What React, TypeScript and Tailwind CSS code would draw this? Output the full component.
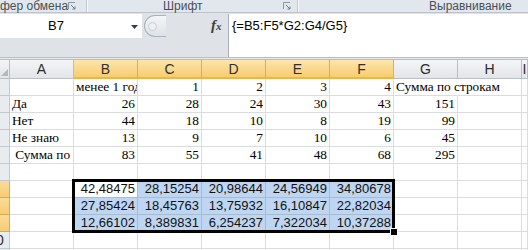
import React from "react";

const COLS = ["A", "B", "C", "D", "E", "F", "G", "H", "I"];
const SEL_COLS = new Set(["B", "C", "D", "E", "F"]);
const SEL_ROWS = new Set([7, 8, 9]);

type Cell = { t: string; align?: "l" | "r"; sans?: boolean; clip?: boolean; overflow?: boolean };

const rows: Record<number, Record<string, Cell>> = {
  1: {
    B: { t: "менее 1 год", align: "l", clip: true },
    C: { t: "1" },
    D: { t: "2" },
    E: { t: "3" },
    F: { t: "4" },
    G: { t: "Сумма по строкам", align: "l", overflow: true },
  },
  2: { A: { t: "Да", align: "l" }, B: { t: "26" }, C: { t: "28" }, D: { t: "24" }, E: { t: "30" }, F: { t: "43" }, G: { t: "151" } },
  3: { A: { t: "Нет", align: "l" }, B: { t: "44" }, C: { t: "18" }, D: { t: "10" }, E: { t: "8" }, F: { t: "19" }, G: { t: "99" } },
  4: { A: { t: "Не знаю", align: "l" }, B: { t: "13" }, C: { t: "9" }, D: { t: "7" }, E: { t: "10" }, F: { t: "6" }, G: { t: "45" } },
  5: { A: { t: "\u00a0Сумма по", align: "l", clip: true }, B: { t: "83" }, C: { t: "55" }, D: { t: "41" }, E: { t: "48" }, F: { t: "68" }, G: { t: "295" } },
  7: { B: { t: "42,48475", sans: true }, C: { t: "28,15254", sans: true }, D: { t: "20,98644", sans: true }, E: { t: "24,56949", sans: true }, F: { t: "34,80678", sans: true } },
  8: { B: { t: "27,85424", sans: true }, C: { t: "18,45763", sans: true }, D: { t: "13,75932", sans: true }, E: { t: "16,10847", sans: true }, F: { t: "22,82034", sans: true } },
  9: { B: { t: "12,66102", sans: true }, C: { t: "8,389831", sans: true }, D: { t: "6,254237", sans: true }, E: { t: "7,322034", sans: true }, F: { t: "10,37288", sans: true } },
};

function Launcher() {
  return (
    <svg width="8" height="8" viewBox="0 0 8 8" className="shrink-0">
      <path d="M0.5 7 V0.5 H7" stroke="#8d96a3" strokeWidth="1" fill="none" />
      <path d="M3 3 L7 7 M4.5 7 H7 V4.5" stroke="#6f7a88" strokeWidth="1" fill="none" />
    </svg>
  );
}

function Sep() {
  return <div className="w-[2px] h-full flex shrink-0"><div className="w-px bg-[#c3c9d1]" /><div className="w-px bg-[#f7f9fb]" /></div>;
}

export default function App() {
  const rowNums = Array.from({ length: 11 }, (_, i) => i + 1);
  return (
    <div className="w-[528px] h-[250px] overflow-hidden bg-white" style={{ fontFamily: '"Liberation Sans", Arial, sans-serif' }}>
      {/* Ribbon group labels */}
      <div className="h-[13px] flex items-start bg-[#e2e7ed] border-b border-[#bcc3cc] text-[12px] leading-[12px] text-[#4a4f57]">
        <div className="w-[68px] shrink-0 whitespace-nowrap">фер обмена</div>
        <div className="pt-[2px] shrink-0"><Launcher /></div>
        <div className="w-[10px] shrink-0" />
        <Sep />
        <div className="w-[195px] shrink-0 pl-[75px] whitespace-nowrap">Шрифт</div>
        <div className="pt-[2px] shrink-0"><Launcher /></div>
        <div className="w-[6px] shrink-0" />
        <Sep />
        <div className="pl-[130px] whitespace-nowrap">Выравнивание</div>
      </div>

      {/* Formula bar */}
      <div className="h-[45px] flex bg-[#dfe3e8] border-b border-[#b7bec7]">
        <div className="w-[228px] shrink-0 flex flex-col pt-px">
          <div className="h-[24px] flex items-center">
            <div className="w-[142px] h-full bg-white flex items-center relative">
              <span className="pl-[48px] text-[13px] text-black">B7</span>
              <svg width="7" height="4" viewBox="0 0 7 4" className="absolute left-[131px] top-[11px]">
                <path d="M0 0 H7 L3.5 4 Z" fill="#3c3c3c" />
              </svg>
            </div>
            <div className="ml-[2px] w-[22px] h-[22px] rounded-l-full border border-r-0 border-[#a9b1bc] bg-linear-to-b from-[#f4f6f8] to-[#dde2e8] flex items-center pl-[3px]">
              <div className="w-[9px] h-[9px] rounded-full bg-[#eef0f3] border border-[#c9ced5]" />
            </div>
            <div className="ml-[45px] font-['Liberation_Serif'] italic font-bold text-[15px] leading-none text-[#404040] -mt-[1px]">
              f<span className="text-[11px]">x</span>
            </div>
          </div>
        </div>
        <div className="flex-1 mt-px bg-white border-l border-[#a9b1bc] pl-[3px] pt-[4px] text-[13px] leading-[16px] text-black whitespace-nowrap">
          {"{=B5:F5*G2:G4/G5}"}
        </div>
      </div>

      <div className="h-px bg-[#e6e9ed]" />

      {/* Sheet */}
      <div className="relative">
        <div className="grid grid-cols-[10px_repeat(8,64px)_1fr]">
          {/* Header row */}
          <div className="h-[20px] border-t border-b border-r border-[#b9bec5] bg-linear-to-b from-[#f4f5f7] to-[#e2e5e9] relative">
            <svg width="7" height="7" viewBox="0 0 7 7" className="absolute left-[1px] bottom-[2px]">
              <path d="M7 0 V7 H0 Z" fill="#b4b9c0" />
            </svg>
          </div>
          {COLS.map((c) => {
            const sel = SEL_COLS.has(c);
            return (
              <div
                key={c}
                className={
                  "h-[20px] border-t border-r flex items-center justify-center text-[14px] leading-none " +
                  (sel
                    ? "border-b-2 border-t-[#b9bec5] border-r-[#d7ad62] border-b-[#f0b449] bg-linear-to-b from-[#fce5ac] to-[#f8cd6d] text-[#303030]"
                    : "border-b border-[#b9bec5] bg-linear-to-b from-[#f4f5f7] to-[#e2e5e9] text-[#2c2c2c]")
                }
              >
                {c}
              </div>
            );
          })}

          {rowNums.map((r) => {
            const selRow = SEL_ROWS.has(r);
            const data = rows[r] || {};
            return (
              <React.Fragment key={r}>
                <div
                  className={
                    "h-[17px] border-r border-b overflow-hidden " +
                    (selRow
                      ? "bg-linear-to-b from-[#fadb98] to-[#f6cd72] border-[#dda94d]"
                      : "bg-[#e9ecef] border-[#c3c8ce]")
                  }
                >
                  <div className="w-[26px] -ml-[17px] text-center text-[14px] leading-[16px] text-[#2c2c2c]">{r}</div>
                </div>
                {COLS.map((c) => {
                  const cell = data[c];
                  const inSel = selRow && SEL_COLS.has(c);
                  const active = r === 7 && c === "B";
                  const hideRight = r === 1 && c === "G";
                  let cls = "h-[17px] border-b whitespace-nowrap leading-[16px] ";
                  cls += hideRight ? "border-r border-r-transparent " : "border-r ";
                  if (inSel && !active) cls += "bg-[#bfd6f2] border-[#a9bbd1] ";
                  else if (inSel) cls += "bg-white border-[#a9bbd1] ";
                  else cls += "border-[#dadcdf] ";
                  if (cell) {
                    cls += cell.sans
                      ? "font-['Liberation_Sans'] text-[13px] text-[#111] "
                      : "font-['Liberation_Serif'] text-[13.3px] text-black ";
                    if (cell.align === "l") cls += "pl-[2px] text-left ";
                    else cls += "pr-[2px] text-right ";
                    if (cell.clip) cls += "overflow-hidden ";
                    if (cell.overflow) cls += "overflow-visible relative z-10 ";
                  }
                  return (
                    <div key={c} className={cls}>
                      {cell ? cell.t : ""}
                    </div>
                  );
                })}
              </React.Fragment>
            );
          })}
        </div>

        {/* Selection border */}
        <div className="absolute left-[72px] top-[120px] w-[323px] h-[54px] border-[3px] border-black pointer-events-none" />
        <div className="absolute left-[390px] top-[169px] w-[8px] h-[8px] bg-black border border-white pointer-events-none" />
      </div>
    </div>
  );
}
